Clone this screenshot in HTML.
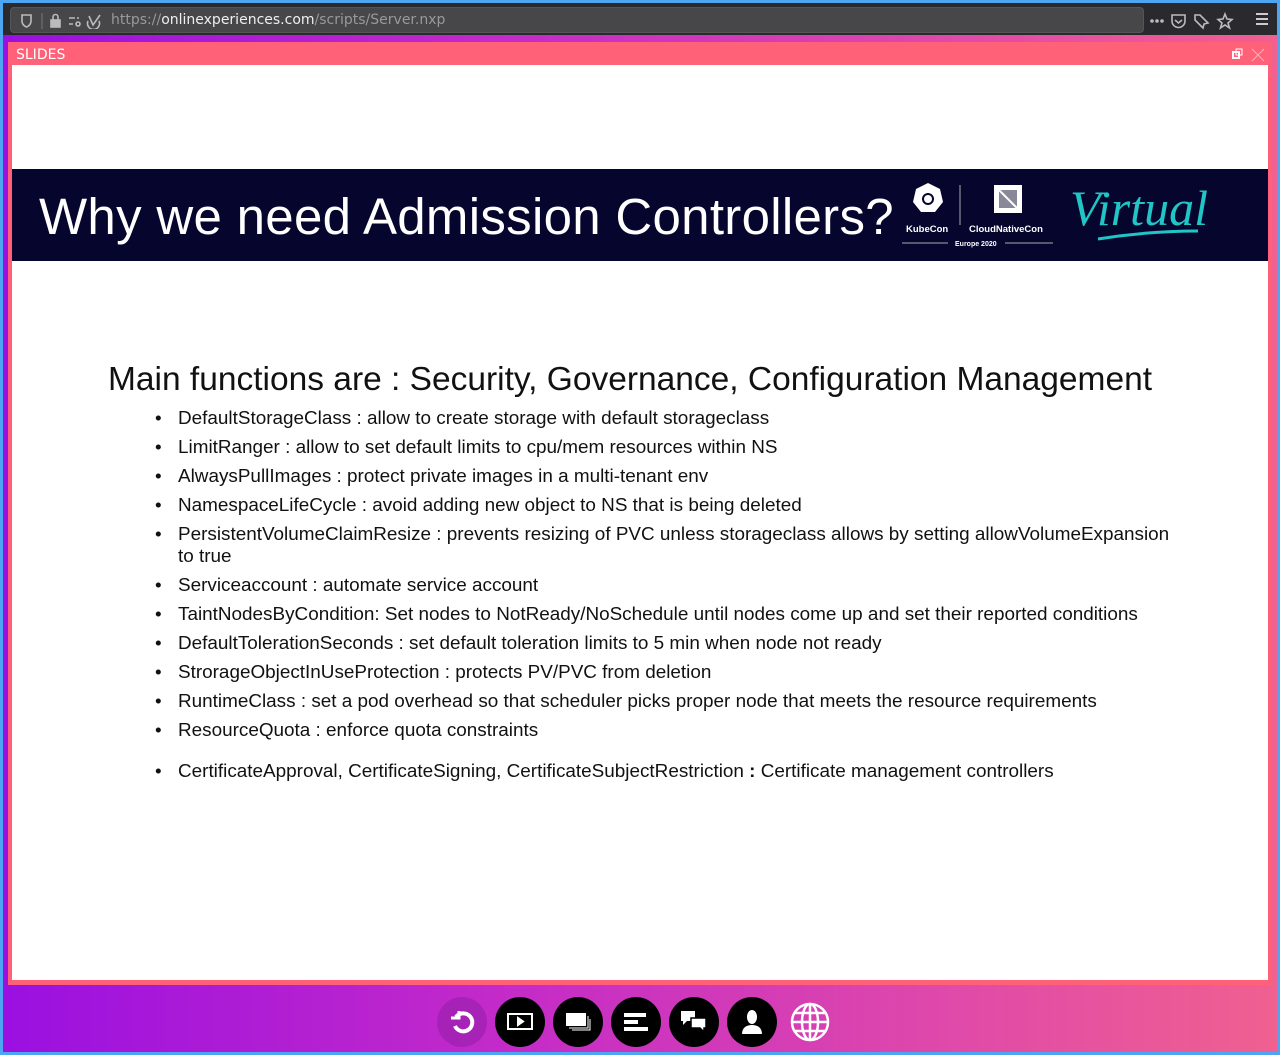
<!DOCTYPE html>
<html><head><style>
*{margin:0;padding:0;box-sizing:border-box}
body{width:1280px;height:1055px;overflow:hidden;background:#4ea6f2;font-family:"Liberation Sans","DejaVu Sans",sans-serif;position:relative}
#tb{position:absolute;left:3px;top:3px;width:1274px;height:32px;background:#2a2a2e}
#url{position:absolute;left:7px;top:4px;width:1134px;height:26px;background:#474749;border-radius:4px;border:1px solid #555}
#url span.t{position:absolute;left:100px;top:4px;font-size:14px;color:#999;font-family:"DejaVu Sans",sans-serif}
#bg{position:absolute;left:3px;top:35px;width:1274px;height:1017px;background:linear-gradient(90deg,#9a10e0 0%,#c42bc8 40%,#e04aa8 75%,#f06090 100%)}
#panel{position:absolute;left:8px;top:42px;width:1264px;height:943px;background:#ff6178}
#panel .h{position:absolute;left:8px;top:5px;color:#fff;font-size:14px;font-family:"DejaVu Sans",sans-serif}
#slide{position:absolute;left:12px;top:65px;width:1256px;height:915px;background:#fff}
#bar{position:absolute;left:0;top:104px;width:1256px;height:92px;background:#05052e}
#bar h1{position:absolute;left:27px;top:18px;color:#fff;font-weight:normal;font-size:51px;letter-spacing:0.3px}
#main{position:absolute;left:96px;top:296px;font-size:33.5px;color:#111}
ul{position:absolute;left:166px;top:343px;list-style:none;font-size:18.9px;color:#111;width:1060px;white-space:nowrap}
li{position:relative;line-height:22px;margin-bottom:7px}
li:before{content:"•";position:absolute;left:-23px}
.ic{position:absolute;top:997px;width:50px;height:50px;border-radius:50%;background:#000;display:flex;align-items:center;justify-content:center}
</style></head><body>
<div id="tb"><div id="url">
<svg style="position:absolute;left:8px;top:5px" width="90" height="16" viewBox="0 0 90 16" fill="none" stroke="#bbb" stroke-width="1.6"><path d="M3 2h9v6c0 3-2 5-4.5 6C5 13 3 11 3 8z"/><path d="M23 0v16" stroke="#666"/><rect x="32" y="7" width="9" height="7" fill="#bbb"/><path d="M34 7V4a2.5 2.5 0 015 0v3"/><path d="M50 5h6M50 11h4M58 5h2"/><circle cx="59" cy="11" r="2"/><path d="M70 3l4 9 7-10M69 8a6 6 0 1011 0"/></svg>
<span class="t">https://<span style="color:#eee">onlinexperiences.com</span>/scripts/Server.nxp</span>
<svg style="position:absolute;left:1138px;top:4px" width="90" height="18" viewBox="0 0 90 18" fill="none" stroke="#bbb" stroke-width="1.6"><circle cx="3" cy="9" r="1" fill="#bbb"/><circle cx="8" cy="9" r="1" fill="#bbb"/><circle cx="13" cy="9" r="1" fill="#bbb"/><path d="M23 3h13v6a6.5 6.5 0 01-13 0z"/><path d="M26 8l3.5 3 3.5-3"/><path d="M46 3l5 0 8 8-4 1-1 4-8-8z"/><path d="M76 2l2 5 5 .5-4 3.5 1.5 5-4.5-3-4.5 3 1.5-5-4-3.5 5-.5z"/></svg>
</div>
<svg style="position:absolute;left:1252px;top:9px" width="14" height="14" stroke="#ccc" stroke-width="2"><path d="M1 2h12M1 7h12M1 12h12"/></svg>
</div>
<div id="bg"></div>
<div id="panel"><span class="h">SLIDES</span>
<svg style="position:absolute;left:1224px;top:6px" width="36" height="14" fill="none" stroke="#fff"><rect x="1" y="4" width="6" height="6" stroke-width="2"/><rect x="4" y="1" width="6" height="6"/><path d="M20 1l12 12M32 1L20 13" stroke="#ffb0bc"/></svg>
</div>
<div id="slide">
<div id="bar"><h1>Why we need Admission Controllers?</h1>
<svg style="position:absolute;left:888px;top:10px" width="320" height="72">
<path d="M28 4l12 6 3 13-8 10H21l-8-10 3-13z" fill="#fff"/><circle cx="28" cy="20" r="5" fill="none" stroke="#05052e" stroke-width="2"/>
<text x="6" y="53" fill="#fff" font-size="9.5" font-weight="bold">KubeCon</text>
<path d="M60 6v40" stroke="#aaa"/>
<rect x="94" y="6" width="28" height="28" fill="#fff"/><rect x="99" y="11" width="18" height="18" fill="#889"/><path d="M99 11l18 18" stroke="#fff" stroke-width="2"/>
<text x="69" y="53" fill="#fff" font-size="9.5" font-weight="bold">CloudNativeCon</text>
<path d="M2 64h46M105 64h48" stroke="#aaa"/><text x="55" y="67" fill="#fff" font-size="7" font-weight="bold">Europe 2020</text>
<text x="170" y="46" fill="#22c5c5" font-size="50" font-style="italic" font-family="Liberation Serif,serif">Virtual</text>
<path d="M198 60q50-8 100-8" stroke="#22c5c5" stroke-width="3" fill="none"/>
</svg></div>
<div id="main">Main functions are : Security, Governance, Configuration Management</div>
<ul>
<li>DefaultStorageClass : allow to create storage with default storageclass</li>
<li>LimitRanger : allow to set default limits to cpu/mem resources within NS</li>
<li>AlwaysPullImages : protect private images in a multi-tenant env</li>
<li>NamespaceLifeCycle : avoid adding new object to NS that is being deleted</li>
<li>PersistentVolumeClaimResize : prevents resizing of PVC unless storageclass allows by setting allowVolumeExpansion<br>to true</li>
<li>Serviceaccount : automate service account</li>
<li>TaintNodesByCondition: Set nodes to NotReady/NoSchedule until nodes come up and set their reported conditions</li>
<li>DefaultTolerationSeconds : set default toleration limits to 5 min when node not ready</li>
<li>StrorageObjectInUseProtection : protects PV/PVC from deletion</li>
<li>RuntimeClass : set a pod overhead so that scheduler picks proper node that meets the resource requirements</li>
<li>ResourceQuota : enforce quota constraints</li>
<li style="margin-top:19px">CertificateApproval, CertificateSigning, CertificateSubjectRestriction <b>:</b> Certificate management controllers</li>
</ul>
</div>
<div class="ic" style="left:437px;background:rgba(150,30,170,.6)"><svg width="28" height="28" fill="none" stroke="#fff" stroke-width="4"><path d="M8 9a9 9 0 11-1 9"/><path d="M3 10h8V3" stroke-width="3"/></svg></div>
<div class="ic" style="left:495px"><svg width="28" height="22" fill="none" stroke="#fff" stroke-width="2"><rect x="2" y="3" width="24" height="15"/><path d="M12 7l5 3.5-5 3.5z" fill="#fff"/></svg></div>
<div class="ic" style="left:553px"><svg width="28" height="24" fill="#fff"><rect x="2" y="3" width="20" height="13"/><path d="M24 6v12H5M26 9v11H8" stroke="#fff" fill="none"/></svg></div>
<div class="ic" style="left:611px"><svg width="26" height="22" fill="#fff"><rect x="1" y="2" width="22" height="4"/><rect x="1" y="9" width="14" height="4"/><rect x="1" y="16" width="24" height="4"/></svg></div>
<div class="ic" style="left:669px"><svg width="30" height="26" fill="#fff"><path d="M2 2h14v10H8l-4 4v-4H2z"/><path d="M12 9h15v10h-2v4l-4-4h-9z" stroke="#000" stroke-width="1.5"/></svg></div>
<div class="ic" style="left:727px"><svg width="24" height="28" fill="#fff"><ellipse cx="12" cy="9" rx="5" ry="7"/><path d="M2 26c0-6 4-9 10-9s10 3 10 9z"/></svg></div>
<div class="ic" style="left:785px;background:none"><svg width="44" height="44" fill="none" stroke="#fff" stroke-width="2.5"><circle cx="22" cy="22" r="18"/><ellipse cx="22" cy="22" rx="8" ry="18"/><path d="M22 4v36M4 22h36M7 13h30M7 31h30"/></svg></div>
</body></html>
